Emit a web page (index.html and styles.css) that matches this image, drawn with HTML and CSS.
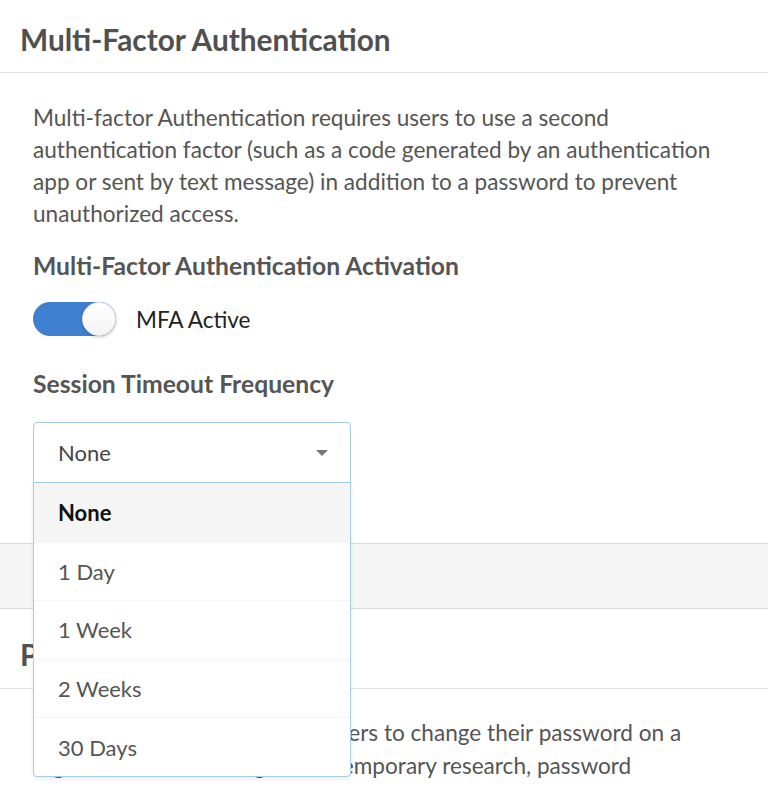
FILE: index.html
```html
<!DOCTYPE html>
<html lang="en">
<head>
<meta charset="utf-8">
<title>Security Settings</title>
<link rel="stylesheet" href="styles.css">
</head>
<body>
<section class="card">
  <header class="card-header"><h2>Multi-Factor Authentication</h2></header>
  <div class="card-body">
    <p class="desc">Multi-factor Authentication requires users to use a second authentication factor (such as a code generated by an authentication app or sent by text message) in addition to a password to prevent unauthorized access.</p>
    <h3 class="label">Multi-Factor Authentication Activation</h3>
    <div class="toggle-row">
      <span class="toggle"><span class="knob"></span></span>
      <span class="toggle-label">MFA Active</span>
    </div>
    <h3 class="label label-session">Session Timeout Frequency</h3>
    <div class="select">
      <div class="select-control">
        <span>None</span>
        <svg class="caret" width="12" height="6" viewBox="0 0 12 6"><path d="M0 0h12L6 6z" fill="#777"/></svg>
      </div>
      <ul class="menu">
        <li class="option selected">None</li>
        <li class="option">1 Day</li>
        <li class="option">1 Week</li>
        <li class="option">2 Weeks</li>
        <li class="option">30 Days</li>
      </ul>
    </div>
  </div>
</section>
<div class="band"></div>
<section class="card">
  <header class="card-header card-header-2"><h2>Password Expiration</h2></header>
  <div class="card-body card-body-2">
    <p class="desc">Password Expiration requires users to change their password on a regular basis. According to contemporary research, password expiration can lead to weaker passwords.</p>
  </div>
</section>
</body>
</html>
```

FILE: styles.css
```css
* { box-sizing: border-box; }
html, body { margin: 0; padding: 0; }
body {
  font-family: Lato, "Open Sans", sans-serif;
  color: #555;
  background: #fff;
  overflow: hidden;
}
.card-header {
  height: 73px;
  padding: 0 20px;
  display: flex;
  align-items: center;
  border-bottom: 1px solid #e2e2e2;
}
.card-header h2 {
  margin: 8px 0 0;
  font-size: 29.8px;
  line-height: 36px;
  font-weight: 700;
  color: #505050;
}
.card-body {
  padding: 29px 33px 60px;
}
.desc {
  margin: 0;
  font-size: 22.6px;
  line-height: 32px;
}
.label {
  margin: 20px 0 0;
  font-size: 24.7px;
  line-height: 32px;
  font-weight: 700;
  color: #555;
}
.label-session { margin-top: 32px; }
.toggle-row {
  display: flex;
  align-items: center;
  gap: 20px;
  margin-top: 20px;
}
.toggle {
  position: relative;
  width: 83px;
  height: 34px;
  border-radius: 17px;
  background: #3f7fcf;
  flex: none;
}
.knob {
  position: absolute;
  right: 0;
  top: 0;
  width: 34px;
  height: 34px;
  border-radius: 50%;
  background: linear-gradient(#fff, #f3f3f3);
  border: 1px solid #e4e4e4;
  box-shadow: 0 1px 3px rgba(0,0,0,0.25);
}
.toggle-label {
  font-size: 22.5px;
  color: #222;
}
.select {
  position: relative;
  width: 318px;
  margin-top: 22px;
}
.select-control {
  height: 61px;
  border: 1px solid #a5cde3;
  border-radius: 4px 4px 0 0;
  padding: 0 22px 0 24px;
  display: flex;
  align-items: center;
  justify-content: space-between;
  font-size: 22px;
  color: #444;
}
.menu {
  position: absolute;
  top: 100%;
  left: 0;
  right: 0;
  margin: -1px 0 0;
  padding: 0;
  list-style: none;
  background: #fff;
  border: 1px solid #a5cde3;
  border-radius: 0 0 4px 4px;
  box-shadow: 0 2px 4px rgba(0,0,0,0.08);
  z-index: 2;
}
.option {
  height: 58.6px;
  display: flex;
  align-items: center;
  padding: 0 24px;
  font-size: 22px;
  color: #555;
  border-top: 1px solid #f4f4f4;
}
.option:first-child { border-top: none; }
.option.selected {
  background: #f5f5f5;
  font-weight: 700;
  color: #111;
}
.band {
  height: 66px;
  background: #f5f5f5;
  border-top: 1px solid #dcdcdc;
  border-bottom: 1px solid #dcdcdc;
}
.card-header-2 { height: 80px; }
.card-header-2 h2 { margin-top: 12px; }
.card-body-2 { padding-top: 27px; padding-bottom: 0; }
.card-body-2 .desc {
  line-height: 33px;
  max-height: 66px;
  overflow: hidden;
}
```
